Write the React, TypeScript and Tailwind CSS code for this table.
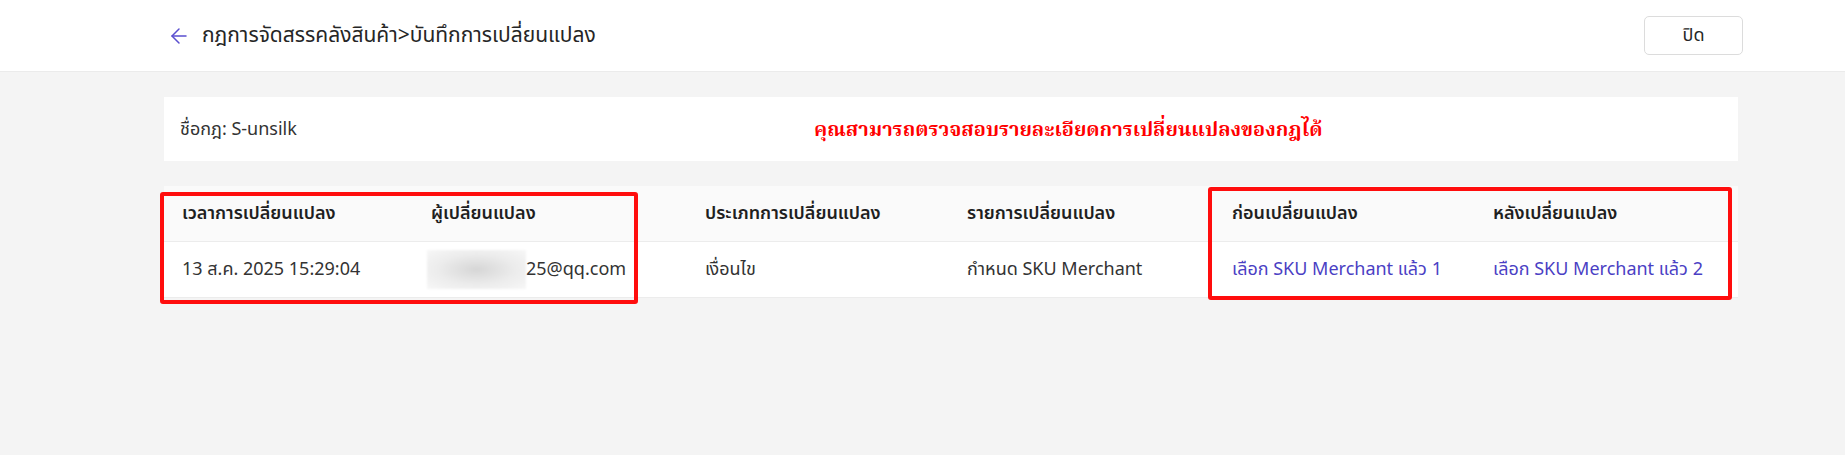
import { ArrowLeft } from "lucide-react";

const columns = [
  "เวลาการเปลี่ยนแปลง",
  "ผู้เปลี่ยนแปลง",
  "ประเภทการเปลี่ยนแปลง",
  "รายการเปลี่ยนแปลง",
  "ก่อนเปลี่ยนแปลง",
  "หลังเปลี่ยนแปลง",
];

const font = "font-['Noto_Sans_Thai','Noto_Sans','Liberation_Sans',sans-serif]";

export default function App() {
  return (
    <div className={`relative min-h-[455px] w-[1845px] bg-[#f4f4f4] ${font}`}>
      {/* Top bar */}
      <header className="flex h-[72px] items-center justify-between border-b border-[#ebebeb] bg-white pl-[167px] pr-[102px]">
        <div className="flex items-center gap-[11px]">
          <ArrowLeft className="h-[24px] w-[24px] text-[#5a4fcf]" strokeWidth={1.5} />
          <span className="text-[21px] text-[#262626]">
            กฎการจัดสรรคลังสินค้า&gt;บันทึกการเปลี่ยนแปลง
          </span>
        </div>
        <button className="flex h-[39px] w-[99px] items-center justify-center rounded-[5px] border border-[#dcdcdc] bg-white text-[18px] text-[#262626]">
          ปิด
        </button>
      </header>

      <div className="ml-[164px] w-[1574px] pt-[25px]">
        {/* Rule name */}
        <div className="relative flex h-[64px] items-center bg-white px-[16px]">
          <span className="text-[18px] text-[#333]">ชื่อกฎ: S-unsilk</span>
          <span className="absolute left-[650px] top-1/2 -translate-y-1/2 font-['Liberation_Serif','Noto_Serif_Thai',serif] text-[20px] font-bold text-[#ff0000]">
            คุณสามารถตรวจสอบรายละเอียดการเปลี่ยนแปลงของกฎได้
          </span>
        </div>

        {/* Change log table */}
        <div className="mt-[25px] bg-white">
          <div className="grid h-[56px] grid-cols-[249px_274px_262px_265px_261px_263px] items-center border-b border-[#ececec] bg-[#fafafa]">
            {columns.map((c) => (
              <div key={c} className="pl-[18px] text-[18px] font-semibold text-[#1f1f1f]">
                {c}
              </div>
            ))}
          </div>
          <div className="grid h-[56px] grid-cols-[249px_274px_262px_265px_261px_263px] items-center border-b border-[#ececec] text-[18px] text-[#333]">
            <div className="pl-[18px]">13 ส.ค. 2025 15:29:04</div>
            <div className="flex items-center pl-[14px]">
              <span className="h-[39px] w-[99px] shrink-0 bg-[radial-gradient(ellipse_at_center,#d6d6d6_0%,#ececec_55%,#f7f7f7_100%)] blur-[1px]" />
              <span>25@qq.com</span>
            </div>
            <div className="pl-[18px]">เงื่อนไข</div>
            <div className="pl-[18px]">กำหนด SKU Merchant</div>
            <div className="pl-[18px] text-[#4b3fc4]">เลือก SKU Merchant แล้ว 1</div>
            <div className="pl-[18px] text-[#4b3fc4]">เลือก SKU Merchant แล้ว 2</div>
          </div>
        </div>
      </div>

      {/* Red annotation boxes */}
      <div className="pointer-events-none absolute left-[160px] top-[192px] h-[112px] w-[478px] rounded-[3px] border-4 border-[#ff0d0d]" />
      <div className="pointer-events-none absolute left-[1208px] top-[187px] h-[113px] w-[524px] rounded-[3px] border-4 border-[#ff0d0d]" />
    </div>
  );
}
